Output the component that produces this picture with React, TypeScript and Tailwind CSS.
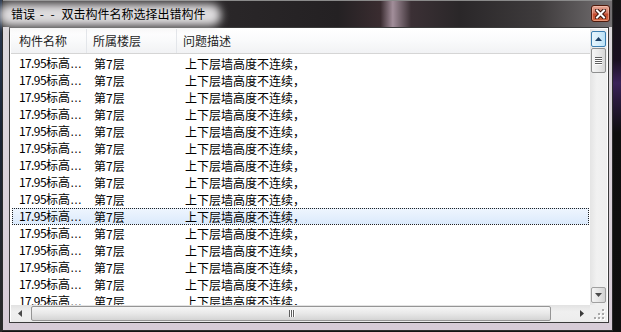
import React from "react";

const rows = Array.from({ length: 15 }, (_, i) => ({
  id: i,
  name: "17.95标高",
  floor: "第7层",
  desc: "上下层墙高度不连续，",
}));

const SELECTED = 9;

function CloseIcon() {
  return (
    <svg width="11" height="10" viewBox="0 0 11 10">
      <path d="M2 1.5L9 8.5M9 1.5L2 8.5" stroke="#3a1208" strokeWidth="4" strokeLinecap="square" />
      <path d="M2 1.5L9 8.5M9 1.5L2 8.5" stroke="#ffffff" strokeWidth="2" strokeLinecap="square" />
    </svg>
  );
}

function Arrow({ dir, color = "#3c3c3c" }: { dir: "up" | "down" | "left" | "right"; color?: string }) {
  const pts = {
    up: "0,4 3.5,0 7,4",
    down: "0,0 7,0 3.5,4",
    left: "4,0 4,7 0,3.5",
    right: "0,0 0,7 4,3.5",
  }[dir];
  const vertical = dir === "up" || dir === "down";
  return (
    <svg width={vertical ? 7 : 4} height={vertical ? 4 : 7} viewBox={vertical ? "0 0 7 4" : "0 0 4 7"}>
      <polygon points={pts} fill={color} />
    </svg>
  );
}

function VScroll() {
  return (
    <div className="w-[17px] flex flex-col bg-[linear-gradient(90deg,#e4e4e4,#f1f1f1_40%,#eeeeee)] pt-[2px] pb-[2px] px-[1px]">
      {/* up button (hover) */}
      <div className="h-[16px] shrink-0 rounded-[2px] border border-[#3c7fb1] bg-[linear-gradient(90deg,#e6f5fd,#d6eefb_50%,#b9e0f6)] flex items-center justify-center">
        <Arrow dir="up" color="#1a3e64" />
      </div>
      {/* thumb */}
      <div className="mt-[1px] h-[25px] shrink-0 rounded-[2px] border border-[#8e8f8f] bg-[linear-gradient(90deg,#f5f5f5,#e9e9e9_50%,#d6d6d6)] flex flex-col items-center justify-center gap-[1px]">
        {[0, 1, 2, 3].map((i) => (
          <div key={i} className="w-[7px] h-[1px] bg-[#5e5e5e] shadow-[0_1px_0_#ffffff]" />
        ))}
      </div>
      <div className="flex-1" />
      <div className="h-[16px] shrink-0 rounded-[2px] border border-[#a0a0a0] bg-[linear-gradient(90deg,#f4f4f4,#e6e6e6_50%,#d2d2d2)] flex items-center justify-center">
        <Arrow dir="down" color="#4a4a4a" />
      </div>
    </div>
  );
}

function HScroll() {
  return (
    <div className="h-[17px] flex bg-[linear-gradient(180deg,#e2e2e2,#f0f0f0_40%,#ececec)]">
      <div className="w-[17px] flex items-center justify-center">
        <Arrow dir="left" color="#4a4a4a" />
      </div>
      <div className="ml-[3px] my-[1px] w-[520px] rounded-[2px] border border-[#959595] bg-[linear-gradient(180deg,#f6f6f6,#e8e8e8_50%,#d4d4d4)] flex items-center justify-center gap-[1px]">
        {[0, 1, 2].map((i) => (
          <div key={i} className="w-[1px] h-[7px] bg-[#5e5e5e] shadow-[1px_0_0_#ffffff]" />
        ))}
      </div>
      <div className="flex-1" />
      <div className="w-[17px] flex items-center justify-center">
        <Arrow dir="right" color="#3a3a3a" />
      </div>
    </div>
  );
}

function SizeGrip() {
  const dots = [
    [12, 4],
    [8, 8],
    [12, 8],
    [4, 12],
    [8, 12],
    [12, 12],
  ];
  return (
    <div className="w-[17px] h-[17px] bg-[#efefef]">
      <svg width="17" height="17" viewBox="0 0 17 17">
        {dots.map(([x, y], i) => (
          <g key={i}>
            <rect x={x + 1} y={y + 1} width="2" height="2" fill="#ffffff" />
            <rect x={x} y={y} width="2" height="2" fill="#a9a9a9" />
          </g>
        ))}
      </svg>
    </div>
  );
}

export default function App() {
  return (
    <div className="w-[621px] h-[332px] overflow-hidden flex bg-[#141414] [font-family:'Microsoft_YaHei','Noto_Sans_CJK_SC',sans-serif] text-[12px]">
      {/* background behind the dialog */}
      <div className="w-[2px] bg-[linear-gradient(180deg,#2b3a52,#1a2434_40%,#2a2a2a)]" />

      <div className="w-[611px] h-[331px] flex flex-col border-x border-b border-[#2c2c2c]">
        {/* Title bar */}
        <div className="relative h-[27px] shrink-0 flex items-center pl-[8px] pr-[2px] bg-[linear-gradient(90deg,#3e3c3d_0%,#2a2729_35%,#242123_55%,#3a2c30_62%,#a28e9a_64%,#3b3035_67%,#2a2729_75%,#3e3b3c_88%,#747072_100%)] border-t border-[#8a8a8a]">
          <div className="absolute left-[-4px] top-[3px] w-[222px] h-[22px] rounded-[10px] bg-[#dedcde] blur-[4px]" />
          <span className="relative text-[12px] text-black leading-none">
            错误<span className="tracking-[2px]"> - - </span>双击构件名称选择出错构件
          </span>
          <div className="flex-1" />
          <button className="relative self-start mt-[4px] w-[19px] h-[17px] rounded-[3px] border border-[#4f1a0c] bg-[linear-gradient(180deg,#e5a898,#d47a64_45%,#c24a2e_55%,#d2653f)] flex items-center justify-center shadow-[inset_0_0_0_1px_rgba(255,210,190,0.45)]">
            <CloseIcon />
          </button>
        </div>

        {/* Body with frame */}
        <div className="flex-1 flex flex-col bg-[linear-gradient(180deg,#dcd8dc,#d7ccd7)]">
          <div className="flex">
            <div className="w-[6px]" />
            <div className="w-[600px] h-[296px] border border-[#3a3a3a]">
              <div className="h-full border border-white flex flex-col bg-white">
                <div className="flex h-[276px] shrink-0">
                  {/* List */}
                  <div className="w-[579px] flex flex-col overflow-hidden">
                    <div className="h-[25px] shrink-0 flex items-center border-b border-[#d5d5d5] bg-[linear-gradient(180deg,#ffffff,#f9fafb_50%,#f1f2f4)] text-[#1e1e1e]">
                      <div className="w-[76px] h-full flex items-center pl-[8px] border-r border-[#e3e6ea]">构件名称</div>
                      <div className="w-[90px] h-full flex items-center pl-[6px] border-r border-[#e3e6ea]">所属楼层</div>
                      <div className="flex-1 h-full flex items-center pl-[6px]">问题描述</div>
                    </div>
                    <div className="pt-[1px] shrink-0 flex flex-col">
                      {rows.map((r) => (
                        <div
                          key={r.id}
                          className={`h-[17px] shrink-0 flex items-center text-black leading-none ${
                            r.id === SELECTED
                              ? "mx-[1px] border border-dotted border-[#222] bg-[linear-gradient(180deg,#eef5fe,#dbeafc)]"
                              : "mx-[1px] border border-transparent"
                          }`}
                        >
                          <div className="w-[75px] pl-[6px] whitespace-nowrap">
                            <span className="tracking-[-0.6px]">17.95</span>标高
                            <span className="[font-family:'Liberation_Sans',sans-serif] tracking-[1px]">…</span>
                          </div>
                          <div className="w-[90px] pl-[6px] whitespace-nowrap">{r.floor}</div>
                          <div className="flex-1 pl-[7px] whitespace-nowrap">{r.desc}</div>
                        </div>
                      ))}
                    </div>
                  </div>
                  <VScroll />
                </div>
                <div className="flex">
                  <div className="w-[579px]">
                    <HScroll />
                  </div>
                  <SizeGrip />
                </div>
              </div>
            </div>
            <div className="flex-1" />
          </div>
        </div>
      </div>

      <div className="flex-1 bg-[linear-gradient(180deg,#141414,#1a1020_18%,#3a2258_25%,#2a1a3c_30%,#0e0e0e_40%,#101010)]" />
    </div>
  );
}
